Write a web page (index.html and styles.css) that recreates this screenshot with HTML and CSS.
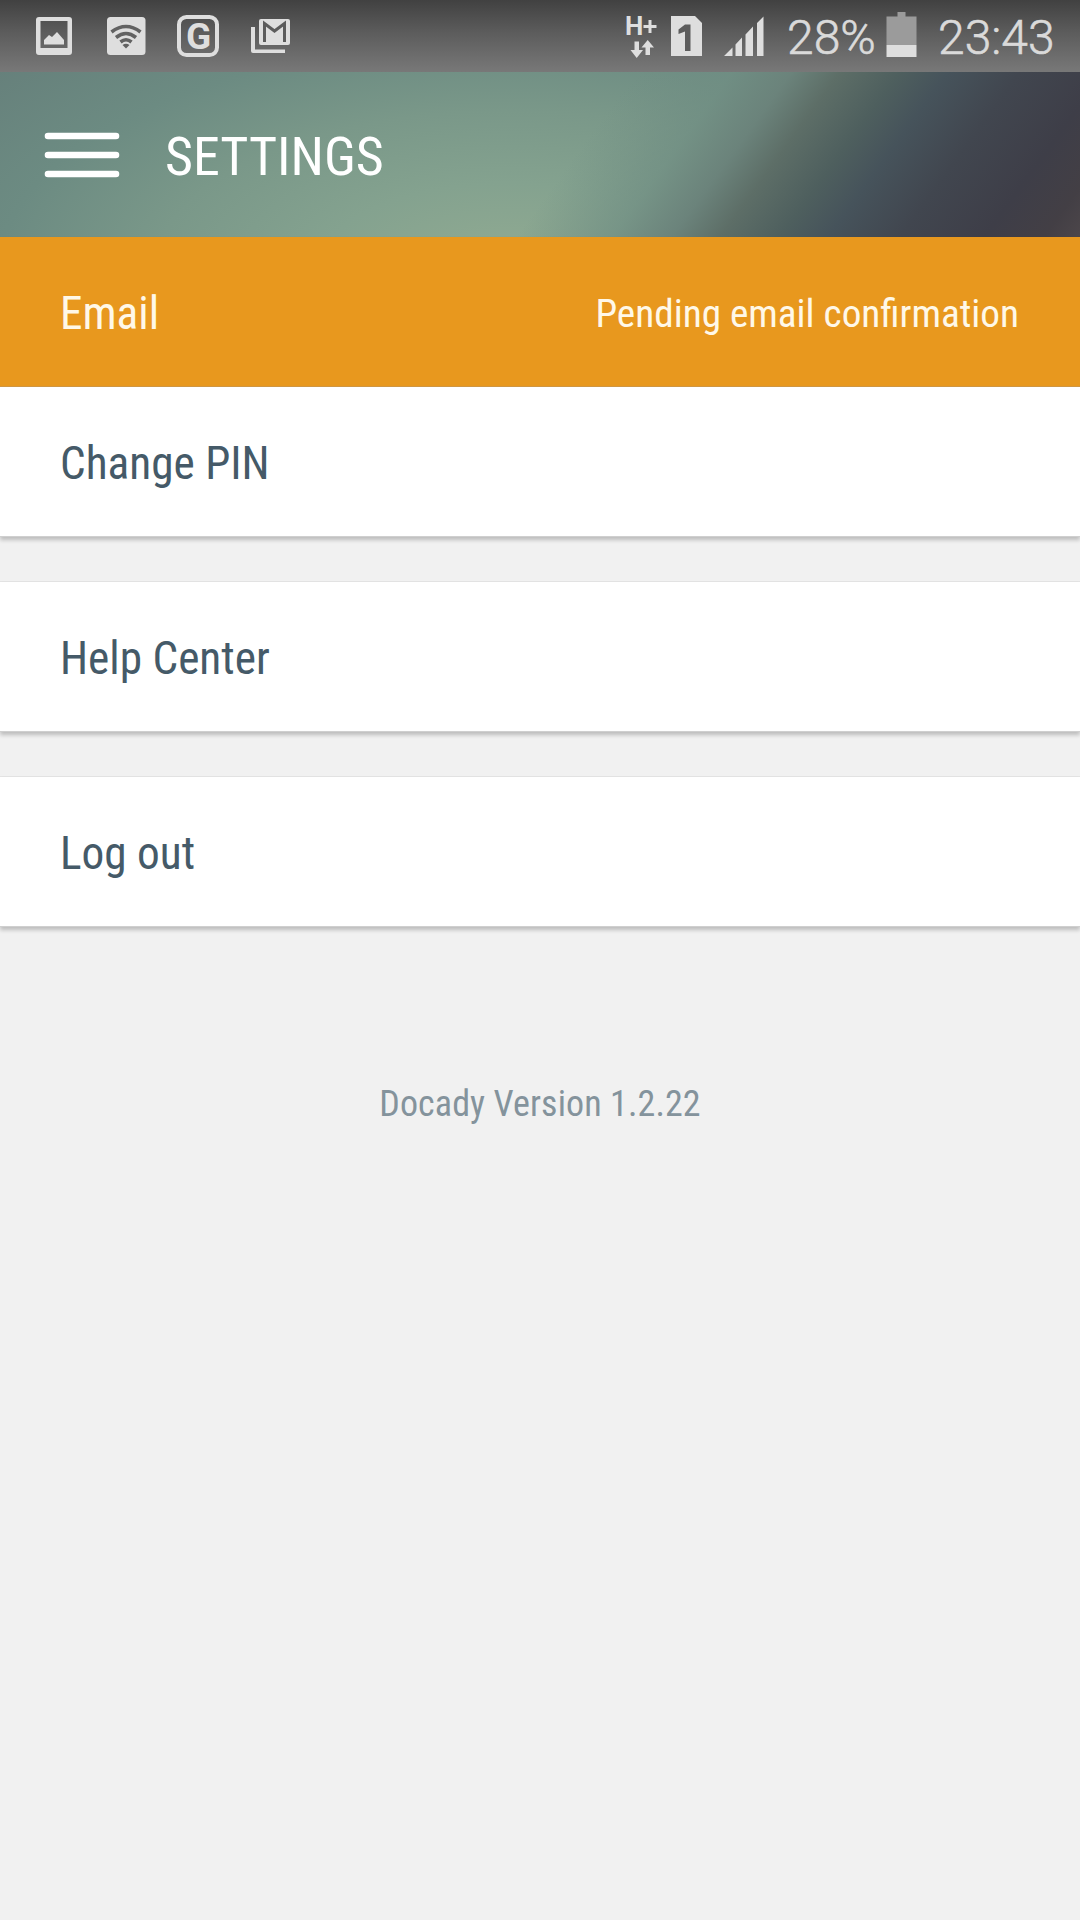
FILE: index.html
```html
<!DOCTYPE html>
<html lang="en">
<head>
<meta charset="utf-8">
<title>Settings</title>
<link rel="stylesheet" href="styles.css">
</head>
<body>
<div class="status">
  <svg class="status-notifications" width="300" height="72" viewBox="0 0 300 72" fill="#dedede">
    <path fill-rule="evenodd" d="M39 17h30a3 3 0 0 1 3 3v32a3 3 0 0 1-3 3H39a3 3 0 0 1-3-3V20a3 3 0 0 1 3-3zM40.500 21v27h27V21z"/>
    <path d="M44 44.500V40l5-5 3 2 5-5 7 8v4.500z"/>
    <rect x="107" y="17" width="38.500" height="38" rx="3.500"/>
    <g fill="none" stroke="#626262" stroke-width="3.600">
      <path d="M111.500 32q14.500-11 29 0M116 37.500q10-8 20 0M120.500 42q5.500-4.500 11 0"/>
    </g>
    <path fill="#626262" d="M122.500 45q3.500-2.500 7 0L126 48.500z"/>
    <rect x="179" y="17" width="38" height="38" rx="7.500" fill="none" stroke="#dedede" stroke-width="4"/>
    <path d="M251 27h4v22.500h30V53h-32a2 2 0 0 1-2-2z"/>
    <rect x="259" y="19" width="31" height="26" rx="2"/>
    <path d="M264.500 42V23.500L274.500 31l10-7.500V42" fill="none" stroke="#5c5c5c" stroke-width="3"/>
    <text class="badge-g" x="198.500" y="48.500" text-anchor="middle">G</text>
  </svg>
  <svg class="status-signal" width="150" height="72" viewBox="620 0 150 72" fill="#dedede">
    <text class="network" x="625" y="35">H</text>
    <path d="M643.500 25h5v-5h3v5h5v3h-5v5h-3v-5h-5z"/>
    <path d="M634.500 41.500h4.500v8.500h4l-6.300 8-6.200-8h4zM645.500 55h4.500v-7.500h4L647.700 40l-6.200 7.500h4z"/>
    <path d="M671 16h24l7 7v33h-31z"/>
    <path fill="#5c5c5c" d="M685 24.500h5.500V51H685V31.500l-6.500 2.500v-4.500z"/>
    <path d="M724 56l8.500-8.500V56zM735.500 44.500l6.500-7V56h-6.500zM745.500 34.500l7.500-8V56h-7.500zM757 23l6.500-6.500V56H757z"/>
  </svg>
  <span class="percent">28%</span>
  <svg class="battery" width="31" height="46" viewBox="0 0 31 46">
    <path fill="#9b9b9b" d="M11.500 0h8v4.500H30.500V33H.500V4.500h11z"/>
    <path fill="#dedede" d="M.500 33h30v12H.500z"/>
  </svg>
  <span class="clock">23:43</span>
</div>
<header class="toolbar">
  <svg width="76" height="48" viewBox="0 0 76 48" stroke="#fff" stroke-width="6.600" stroke-linecap="round">
    <path d="M4 5h68M4 24h68M4 43h68"/>
  </svg>
  <h1 class="title">SETTINGS</h1>
</header>
<main>
  <section class="group">
    <div class="row row-email"><span>Email</span><span class="note">Pending email confirmation</span></div>
    <div class="row">Change PIN</div>
  </section>
  <section class="group"><div class="row">Help Center</div></section>
  <section class="group"><div class="row">Log out</div></section>
  <p class="version">Docady Version 1.2.22</p>
</main>
</body>
</html>
```
FILE: styles.css
```css
* { box-sizing: border-box; }

body {
  margin: 0;
  min-height: 1920px;
  background: #f1f1f1;
  font-family: "Roboto Condensed", Roboto, sans-serif;
  font-stretch: condensed;
}

.status {
  display: flex;
  align-items: flex-start;
  height: 72px;
  background: linear-gradient(#414141, #5c5c5c 45%, #787878);
  color: #dadada;
  font-family: Roboto, sans-serif;
  font-stretch: normal;
  font-size: 48px;
  font-weight: 300;
  line-height: 75px;
  -webkit-text-stroke: .6px #dadada;
}

.status svg { -webkit-text-stroke: 0; }
.status-signal { margin-left: 320px; }
.badge-g { font: 700 37px Roboto, sans-serif; }
.network { font: 700 26px Roboto, sans-serif; }
.percent { width: 88px; margin-left: 17px; }
.battery { margin: 12px 0 0 11px; }
.clock { margin-left: 21px; }

.toolbar {
  display: flex;
  align-items: center;
  gap: 45px;
  height: 165px;
  padding: 0 44px;
  color: #fff;
  background:
    linear-gradient(126deg, rgba(115, 146, 133, 0) 53%, rgba(112, 142, 131, .7) 61%, #6b837b 66%, #5d6e67 70%, #4e5f5e 75%, #46535b 79%, #41464f 85%, #3e3e48 92%, #433f45 97%, #4c464a),
    radial-gradient(680px 300px at 510px 195px, #91ab92, #84a28f 28%, #7a9889 52%, #6c8b82 75%, #66807b 100%);
}

.title {
  margin: 5px 0 0;
  font-size: 54px;
  font-weight: 400;
  line-height: 64px;
}

.group {
  margin-bottom: 45px;
  background: #fff;
  border-bottom: 1px solid #cfcfcf;
  box-shadow: 0 3px 4px rgba(0, 0, 0, .22);
}

.group + .group { box-shadow: 0 3px 4px rgba(0, 0, 0, .22), 0 -1px 0 #e4e4e4; }

.row {
  display: flex;
  align-items: center;
  justify-content: space-between;
  height: 149px;
  padding: 4px 61px 0 60px;
  color: #455a68;
  font-size: 45.3px;
}

.row-email {
  height: 150px;
  background: #e8981e;
  border-bottom: 1px solid #cf9643;
  color: #fff8e8;
}

.note { font-size: 39.2px; }

.version {
  margin: 154px 0 0;
  color: #84939c;
  font-size: 36px;
  letter-spacing: .1px;
  line-height: 46px;
  text-align: center;
}
```
